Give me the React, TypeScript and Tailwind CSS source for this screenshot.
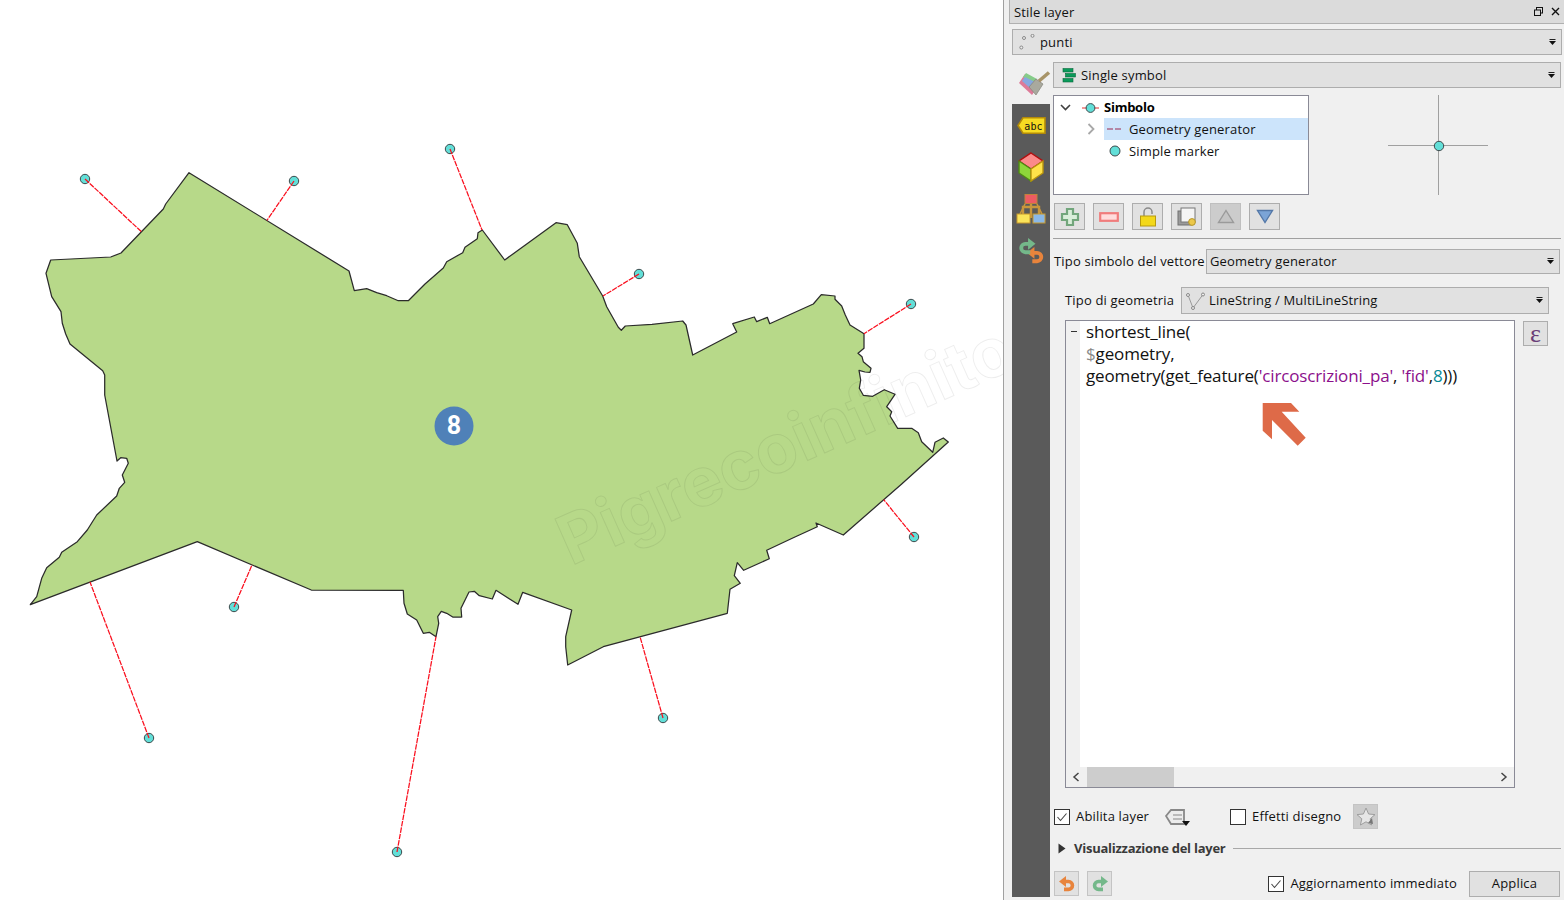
import type { ReactNode } from 'react'

const POLY = `189,172.7 349,271 354.3,290.7 366.7,288.7 376.7,292.7 386.7,295.7 398.3,300.7 408.3,300.7 425,284 443.3,268 446.7,261.7 462.7,252.7 465,247.3 477.3,238.7 478,232.7 482.3,230 504.7,260 556,222.7 567.3,224.7 577.3,243.3 579.3,256.7 602.7,296 606.7,306.7 618.3,327.3 621.3,330.3 625.3,326 652,324.3 682.7,321 686,325 692.7,355 736.7,332 732.7,323.7 754.3,317 756.7,321.7 767.3,317.3 769.7,323.7 813.3,304 821.3,294.7 835,296 835,299.3 841.7,306 845.3,315 850,325 864,333.7 864,348.3 858,353.3 862,356.7 863.3,361.7 871,368.3 870,372.3 865,372 859,370.3 860.7,380 859.3,388.3 863.3,395.3 872.7,396.3 884.3,389.7 895,394.3 886.7,406.7 891.7,411.7 890,416 897.7,428.3 911.7,428.3 918.3,432.7 921.7,441.7 932.7,452.3 935,442.3 943.3,438 948.3,442 901.7,484 843.3,535 816,523 817.3,526.7 793.3,537.7 766.7,550.3 769.3,558.7 743.7,570.3 737.3,562.7 734.3,575.7 740.3,583.3 730,589.3 727.3,613.3 603.3,646.7 567.7,665 565.7,646.7 565.7,636.7 571.7,610 522.7,592.3 518,604.3 496,590.3 492.3,599 479.3,595.7 474.3,591.3 469,592 461,608.3 461.7,617 452.7,617 446.7,613.3 441.3,611.3 437.7,616.7 438.7,623.3 436,636.7 429.3,632.3 423.3,633.3 416.7,620 407.3,614 404,603.3 403.3,590.3 311.3,590 197.3,541.7 30.3,604.7 36.7,596.7 41.7,578.3 46.7,567.7 59.3,557.3 61.7,552.3 77.3,541.7 87.3,530 96.7,515 116.7,496 119.3,488.3 124.7,482.3 122.3,475 128.3,463.3 126.7,458.3 120.7,457.7 117,461 104.7,395 104.7,375 102.7,370.7 70,344 65.7,334 62.3,323.3 61,311.7 51.7,296.7 46,273.3 50.7,260 110.7,257 121,253 163.3,209 165.7,204`

const LINKS = [
  [85, 179, 141.7, 232],
  [294, 181, 267, 220.3],
  [450, 149, 482, 230],
  [639, 274, 603, 296],
  [911, 304, 864, 333.7],
  [914, 537, 883.7, 499.7],
  [663, 718, 640, 636.7],
  [397, 852, 436, 636.7],
  [149, 738, 90, 582],
  [234, 607, 252, 565],
]

function MapCanvas() {
  return (
    <svg width="1003" height="900" viewBox="0 0 1003 900" className="block shrink-0 bg-white">
      <polygon points={POLY} fill="#b7d989" stroke="#2b2b2b" strokeWidth="1.25" strokeLinejoin="round" />
      {LINKS.map(([x, y]) => (
        <circle key={`${x}-${y}`} cx={x} cy={y} r="4.7" fill="#62dfd8" stroke="#3d4a4c" strokeWidth="1" />
      ))}
      {LINKS.map(([x, y, x2, y2]) => (
        <line key={`l${x}-${y}`} x1={x} y1={y} x2={x2} y2={y2} stroke="#fa0f1e" strokeWidth="1.25" strokeDasharray="5.5 1" />
      ))}
      <text
        transform="translate(571 566) rotate(-24)"
        fontFamily="Inter, sans-serif"
        fontWeight="700"
        fontSize="68"
        fill="none"
        stroke="#000"
        strokeOpacity="0.07"
        strokeWidth="1"
      >
        Pigrecoinfinito
      </text>
      <circle cx="454" cy="426" r="19.5" fill="#4f81b8" />
      <text x="454" y="433.5" textAnchor="middle" fontFamily="Roboto, sans-serif" fontWeight="700" fontSize="25" fill="#fff">
        8
      </text>
    </svg>
  )
}

function ComboArrow() {
  return (
    <svg width="9" height="7" viewBox="0 0 9 7" className="shrink-0">
      <rect x="1.5" y="0" width="6" height="1" fill="#222" />
      <polygon points="1,2 8,2 4.5,6" fill="#111" />
    </svg>
  )
}

function Combo({ className, children }: { className: string; children: ReactNode }) {
  return (
    <div className={`flex items-center justify-between border border-[#adadad] bg-[#e1e1e1] pr-[4px] ${className}`}>
      <div className="flex items-center">{children}</div>
      <ComboArrow />
    </div>
  )
}

function ToolBtn({ children, off }: { children: ReactNode; off?: boolean }) {
  return (
    <div className={`flex h-[27px] w-[31px] items-center justify-center border ${off ? 'border-[#bfbfbf] bg-[#cccccc]' : 'border-[#adadad] bg-[#e1e1e1]'}`}>
      {children}
    </div>
  )
}

function Check({ on }: { on?: boolean }) {
  return (
    <div className="flex h-[16px] w-[16px] shrink-0 items-center justify-center border border-[#333] bg-white">
      {on && (
        <svg width="12" height="10" viewBox="0 0 12 10">
          <path d="M1.5 5 L4.5 8.5 L10.5 1.5" fill="none" stroke="#444" strokeWidth="1.1" />
        </svg>
      )}
    </div>
  )
}

function Undo({ flip, color = '#e8843c', w = 16 }: { flip?: boolean; color?: string; w?: number }) {
  return (
    <svg width={w} height={w} viewBox="0 0 16 16" className={flip ? '-scale-x-100' : ''}>
      <polygon points="0,5.5 7,0 7,11" fill={color} />
      <path d="M5 5.5 H9.5 A3.9 3.9 0 0 1 9.5 13.4 H5" fill="none" stroke={color} strokeWidth="3.6" />
    </svg>
  )
}

function SideIcons() {
  return (
    <div className="flex flex-1 flex-col items-center bg-[#5a5a5a] pt-[13px]">
      <svg width="29" height="17" viewBox="0 0 29 17">
        <polygon points="6,0.8 28,0.8 28,16.2 6,16.2 1,8.5" fill="#f7dc22" stroke="#b38a08" strokeWidth="1.6" />
        <text x="16.5" y="12.5" textAnchor="middle" fontFamily="'DejaVu Sans Mono', monospace" fontSize="10" fill="#111">abc</text>
      </svg>
      <svg width="26" height="30" viewBox="0 0 26 30" className="mt-[18px]">
        <polygon points="13,1 25,9 13,17 1,9" fill="#fb8a8a" stroke="#b01010" strokeWidth="1.5" />
        <polygon points="1,9 13,17 13,29 1,21" fill="#8ed63a" stroke="#4f8a14" strokeWidth="1.4" />
        <polygon points="25,9 13,17 13,29 25,21" fill="#ffe24a" stroke="#b8940e" strokeWidth="1.4" />
      </svg>
      <svg width="30" height="30" viewBox="0 0 30 30" className="mt-[12px]">
        <path d="M15 10 V24 M7 20 V13 H23 V20" fill="none" stroke="#c8963c" strokeWidth="2.4" />
        <path d="M4 20 L9 10 M26 20 L21 10" stroke="#c8963c" strokeWidth="1.6" />
        <rect x="9" y="0.5" width="12" height="9" fill="#ee5b62" stroke="#c0833a" />
        <rect x="1" y="20" width="13" height="9" fill="#fbe45a" stroke="#c89a2c" />
        <rect x="17" y="20" width="12" height="9" fill="#8ab8e8" stroke="#c89a2c" />
      </svg>
      <div className="mt-[14px] flex h-[26px] w-[26px] flex-col">
        <Undo flip color="#74b88a" w={18} />
        <div className="-mt-[8px] ml-[9px]">
          <Undo w={17} />
        </div>
      </div>
    </div>
  )
}

function PaintIcon() {
  return (
    <svg width="34" height="28" viewBox="0 0 34 28" className="mt-[6px] ml-[5px]">
      <polygon points="2,15 8,6 24,14 15,27" fill="#dd7a98" />
      <polygon points="6,9 9,5 20,11 14,15" fill="#86cc8a" />
      <polygon points="5,13 8,9 18,14 13,20" fill="#86a8e0" />
      <polygon points="12,19 19,11 26,16 19,27" fill="#a9a99e" stroke="#84847a" strokeWidth="0.7" />
      <path d="M22 13 L32 4.5" stroke="#a89468" strokeWidth="3.6" />
    </svg>
  )
}

function TreePanel() {
  return (
    <div className="h-[100px] w-[256px] shrink-0 border border-[#8a8a96] bg-white pt-px">
      <div className="flex h-[21px] items-center pl-[6px]">
        <svg width="11" height="7" viewBox="0 0 11 7">
          <path d="M1 1 L5.5 5.5 L10 1" fill="none" stroke="#404040" strokeWidth="1.6" />
        </svg>
        <svg width="17" height="12" viewBox="0 0 17 12" className="ml-[11px]">
          <line x1="0" y1="6" x2="17" y2="6" stroke="#e03030" />
          <circle cx="8.5" cy="6" r="4.4" fill="#62dfd8" stroke="#3d4a4c" />
        </svg>
        <span className="ml-[5px] font-bold tracking-[-0.25px] text-black">Simbolo</span>
      </div>
      <div className="flex h-[22px] items-center">
        <svg width="8" height="12" viewBox="0 0 8 12" className="ml-[33px]">
          <path d="M1.5 1 L6.5 6 L1.5 11" fill="none" stroke="#a8a8a8" strokeWidth="1.8" />
        </svg>
        <div className="ml-[9px] flex h-full flex-1 items-center bg-[#cce4fb] pl-[3px]">
          <svg width="16" height="2" viewBox="0 0 16 2">
            <line x1="0" y1="1" x2="16" y2="1" stroke="#9c2a50" strokeDasharray="6 2" />
          </svg>
          <span className="ml-[6px] pt-px">Geometry generator</span>
        </div>
      </div>
      <div className="flex h-[22px] items-center pl-[55px]">
        <svg width="12" height="12" viewBox="0 0 12 12">
          <circle cx="6" cy="6" r="5" fill="#62dfd8" stroke="#3d4a4c" />
        </svg>
        <span className="ml-[8px] pt-px">Simple marker</span>
      </div>
    </div>
  )
}

function SymbolPreview() {
  return (
    <svg width="102" height="100" viewBox="0 0 102 100" className="ml-[78px] shrink-0">
      <line x1="1" y1="50.5" x2="101" y2="50.5" stroke="#a0a0a0" />
      <line x1="51.5" y1="0" x2="51.5" y2="100" stroke="#a0a0a0" />
      <circle cx="52" cy="51" r="4.7" fill="#62dfd8" stroke="#3d4a4c" />
    </svg>
  )
}

function Toolbar() {
  return (
    <div className="mt-[8px] flex gap-[8px] pl-px">
      <ToolBtn>
        <svg width="20" height="20" viewBox="0 0 20 20">
          <path d="M7 2 H13 V7 H18 V13 H13 V18 H7 V13 H2 V7 H7 Z" fill="#d9eeda" stroke="#72a67c" strokeWidth="2.2" />
        </svg>
      </ToolBtn>
      <ToolBtn>
        <svg width="20" height="10" viewBox="0 0 20 10">
          <rect x="1.2" y="1.2" width="17.6" height="7.6" fill="#ffdcdc" stroke="#f07c7c" strokeWidth="2.2" />
        </svg>
      </ToolBtn>
      <ToolBtn>
        <svg width="18" height="20" viewBox="0 0 18 20">
          <path d="M5 9 V5 A4 4 0 0 1 13 5 V7" fill="none" stroke="#8a8a8a" strokeWidth="1.5" />
          <rect x="1.5" y="9" width="15" height="10" fill="#f3d81a" stroke="#b79a10" />
        </svg>
      </ToolBtn>
      <ToolBtn>
        <svg width="20" height="20" viewBox="0 0 20 20">
          <rect x="1" y="4" width="13" height="14" fill="#9a9a9a" stroke="#707070" />
          <rect x="4" y="1" width="14" height="14" fill="#f5f5f5" stroke="#777" />
          <circle cx="15" cy="15" r="3.4" fill="#ecc84a" stroke="#b4962c" />
        </svg>
      </ToolBtn>
      <ToolBtn off>
        <svg width="18" height="15" viewBox="0 0 18 15">
          <polygon points="9,1.5 16.5,13.5 1.5,13.5" fill="#c4c4c4" stroke="#9a9a9a" strokeWidth="1.4" />
        </svg>
      </ToolBtn>
      <ToolBtn>
        <svg width="18" height="15" viewBox="0 0 18 15">
          <polygon points="1.5,1.5 16.5,1.5 9,13.5" fill="#7ba4d6" stroke="#5478a8" strokeWidth="1.4" />
        </svg>
      </ToolBtn>
    </div>
  )
}

function Editor() {
  return (
    <div className="relative ml-[12px] flex h-[468px] w-[450px] shrink-0 flex-col border border-[#8a8a96] bg-white">
      <div className="flex flex-1">
        <div className="w-[14px] shrink-0 bg-[#f0f0f0] pt-[10px] pl-[5px]">
          <div className="h-px w-[6px] bg-[#333]" />
        </div>
        <div className="pl-[6px] font-['Open_Sans'] text-[17px] leading-[22px] tracking-[-0.15px] text-[#111]">
          <div>shortest_line(</div>
          <div><span className="text-[#8a8a8a]">$</span>geometry,</div>
          <div>
            geometry(get_feature(<span className="text-[#8b0f8b]">'circoscrizioni_pa'</span>, <span className="text-[#8b0f8b]">'fid'</span>,<span className="text-[#0a8a96]">8</span>)))
          </div>
        </div>
      </div>
      <div className="flex h-[20px] items-center bg-[#f0f0f0]">
        <svg width="8" height="10" viewBox="0 0 8 10" className="ml-[6px]">
          <path d="M6.5 1 L2 5 L6.5 9" fill="none" stroke="#444" strokeWidth="1.5" />
        </svg>
        <div className="ml-[7px] h-full w-[87px] bg-[#cdcdcd]" />
        <svg width="8" height="10" viewBox="0 0 8 10" className="mr-[6px] ml-auto">
          <path d="M1.5 1 L6 5 L1.5 9" fill="none" stroke="#444" strokeWidth="1.5" />
        </svg>
      </div>
      {/* freccia sopra l'editor */}
      <svg width="46" height="45" viewBox="0 0 46 45" className="absolute top-[82px] left-[196px]">
        <polygon points="0.7,0 29,0 37.3,8.7 19.7,8.7 43.7,34.7 35.7,42.7 10,17 10,36.3 0.7,27.7" fill="#de6a48" />
      </svg>
    </div>
  )
}

export default function App() {
  return (
    <div className="flex h-[900px] w-[1564px] overflow-hidden bg-white font-['Open_Sans',sans-serif] text-[13px] tracking-[0.17px] text-[#111]">
      <MapCanvas />

      <div className="flex w-[561px] flex-col border-l border-[#a0a0a0] bg-[#f0f0f0]">
        <div className="ml-[5px] flex h-[24px] items-center justify-between border-b border-l border-[#b0b0b0] bg-[#dbdbdb] pr-[4px] pl-[4px]">
          <span className="pt-[2px]">Stile layer</span>
          <div className="flex items-center gap-[8px]">
            <svg width="9" height="9" viewBox="0 0 9 9">
              <rect x="2.5" y="0.5" width="6" height="5.5" fill="none" stroke="#111" />
              <rect x="0.5" y="3" width="6" height="5.5" fill="#dbdbdb" stroke="#111" />
            </svg>
            <svg width="9" height="9" viewBox="0 0 9 9">
              <path d="M1 1 L8 8 M8 1 L1 8" stroke="#111" strokeWidth="1.4" />
            </svg>
          </div>
        </div>

        <Combo className="mt-[5px] mr-[2px] ml-[8px] h-[26px]">
          <svg width="18" height="16" viewBox="0 0 18 16" className="ml-[5px]">
            <circle cx="6" cy="4" r="1.5" fill="#eee" stroke="#888" />
            <circle cx="14.5" cy="1.8" r="1.5" fill="#eee" stroke="#888" />
            <circle cx="3.3" cy="13.5" r="1.5" fill="#eee" stroke="#888" />
          </svg>
          <span className="ml-[4px] pt-px">punti</span>
        </Combo>

        <div className="mt-[7px] mb-[3px] flex flex-1 pl-[8px]">
          <div className="flex w-[38px] shrink-0 flex-col">
            <div className="h-[42px]">
              <PaintIcon />
            </div>
            <SideIcons />
          </div>

          <div className="ml-[3px] flex w-[508px] flex-col">
            <Combo className="h-[26px]">
              <svg width="14" height="15" viewBox="0 0 14 15" className="ml-[8px]">
                <rect x="1" y="0.5" width="10" height="3.5" fill="#0a9a5a" stroke="#0a6a3c" strokeWidth="0.6" />
                <rect x="3.5" y="5.5" width="10" height="3.5" fill="#0a9a5a" stroke="#0a6a3c" strokeWidth="0.6" />
                <rect x="1" y="10.5" width="10" height="3.5" fill="#0a9a5a" stroke="#0a6a3c" strokeWidth="0.6" />
              </svg>
              <span className="ml-[5px] pt-px">Single symbol</span>
            </Combo>

            <div className="mt-[7px] flex">
              <TreePanel />
              <SymbolPreview />
            </div>

            <Toolbar />

            <div className="mt-[8px] h-px bg-[#a0a0a0]" />

            <div className="mt-[10px] flex h-[25px] items-center pl-px">
              <span className="w-[152px] shrink-0 whitespace-nowrap">Tipo simbolo del vettore</span>
              <Combo className="h-full w-[354px] pl-[3px]">
                <span>Geometry generator</span>
              </Combo>
            </div>

            <div className="mt-[13px] flex h-[27px] items-center pl-[12px]">
              <span className="w-[116px] shrink-0 whitespace-nowrap">Tipo di geometria</span>
              <Combo className="h-full w-[368px]">
                <svg width="22" height="18" viewBox="0 0 22 18" className="ml-[3px]">
                  <path d="M3 3 L8 16 L18 2.5" fill="none" stroke="#999" />
                  <circle cx="3" cy="3" r="1.5" fill="#eee" stroke="#888" />
                  <circle cx="8" cy="16" r="1.5" fill="#eee" stroke="#888" />
                  <circle cx="18" cy="2.5" r="1.5" fill="#eee" stroke="#888" />
                </svg>
                <span className="ml-[2px]">LineString / MultiLineString</span>
              </Combo>
            </div>

            <div className="mt-[6px] flex">
              <Editor />
              <div className="mt-px ml-[8px] flex h-[25px] w-[25px] items-center justify-center border border-[#adadad] bg-[#e1e1e1] font-['Liberation_Serif'] text-[26px] leading-none text-[#6a3d78]">
                ε
              </div>
            </div>

            <div className="mt-[16px] flex h-[25px] items-center pl-px">
              <Check on />
              <span className="ml-[6px] w-[76px] shrink-0 whitespace-nowrap">Abilita layer</span>
              <svg width="26" height="20" viewBox="0 0 26 20" className="ml-[13px]">
                <polygon points="1,9 6,3 19,3 19,17 6,17" fill="#ececec" stroke="#888" strokeWidth="1.8" />
                <path d="M8 8 H17 M8 12 H17" stroke="#888" />
                <polygon points="17,14 25,14 21,19" fill="#111" />
              </svg>
              <div className="ml-[39px]">
                <Check />
              </div>
              <span className="ml-[6px] w-[89px] shrink-0 whitespace-nowrap">Effetti disegno</span>
              <div className="ml-[12px] flex h-[25px] w-[25px] items-center justify-center border border-[#c4c4c4] bg-[#cccccc]">
                <svg width="20" height="19" viewBox="0 0 20 19">
                  <polygon points="10,1 12.6,7 19,7.6 14.2,11.8 15.6,18 10,14.8 4.4,18 5.8,11.8 1,7.6 7.4,7" fill="#e6e6e6" stroke="#9e9e9e" />
                  <polygon points="16,11 17,17 12,16" fill="#777" />
                </svg>
              </div>
            </div>

            <div className="mt-[9px] flex h-[20px] items-center">
              <svg width="8" height="11" viewBox="0 0 8 11" className="ml-[5px]">
                <polygon points="0.5,0.5 7.5,5.5 0.5,10.5" fill="#333" />
              </svg>
              <span className="ml-[8px] pt-px font-bold tracking-[-0.25px] text-[#3a3a3a]">Visualizzazione del layer</span>
              <div className="ml-[7px] h-px flex-1 bg-[#a8a8a8]" />
            </div>

            <div className="mt-[12px] flex h-[27px] items-center pl-px">
              <div className="flex h-[25px] w-[25px] items-center justify-center border border-[#c4c4c4] bg-[#e1e1e1]">
                <Undo w={16} />
              </div>
              <div className="ml-[8px] flex h-[25px] w-[25px] items-center justify-center border border-[#c4c4c4] bg-[#e1e1e1]">
                <Undo w={16} flip color="#74b88a" />
              </div>
              <div className="ml-auto">
                <Check on />
              </div>
              <span className="ml-[6px] pt-px whitespace-nowrap">Aggiornamento immediato</span>
              <div className="mr-px ml-[12px] flex h-[26px] w-[91px] items-center justify-center border border-[#adadad] bg-[#e1e1e1] pt-px">
                Applica
              </div>
            </div>
          </div>
        </div>
      </div>
    </div>
  )
}
